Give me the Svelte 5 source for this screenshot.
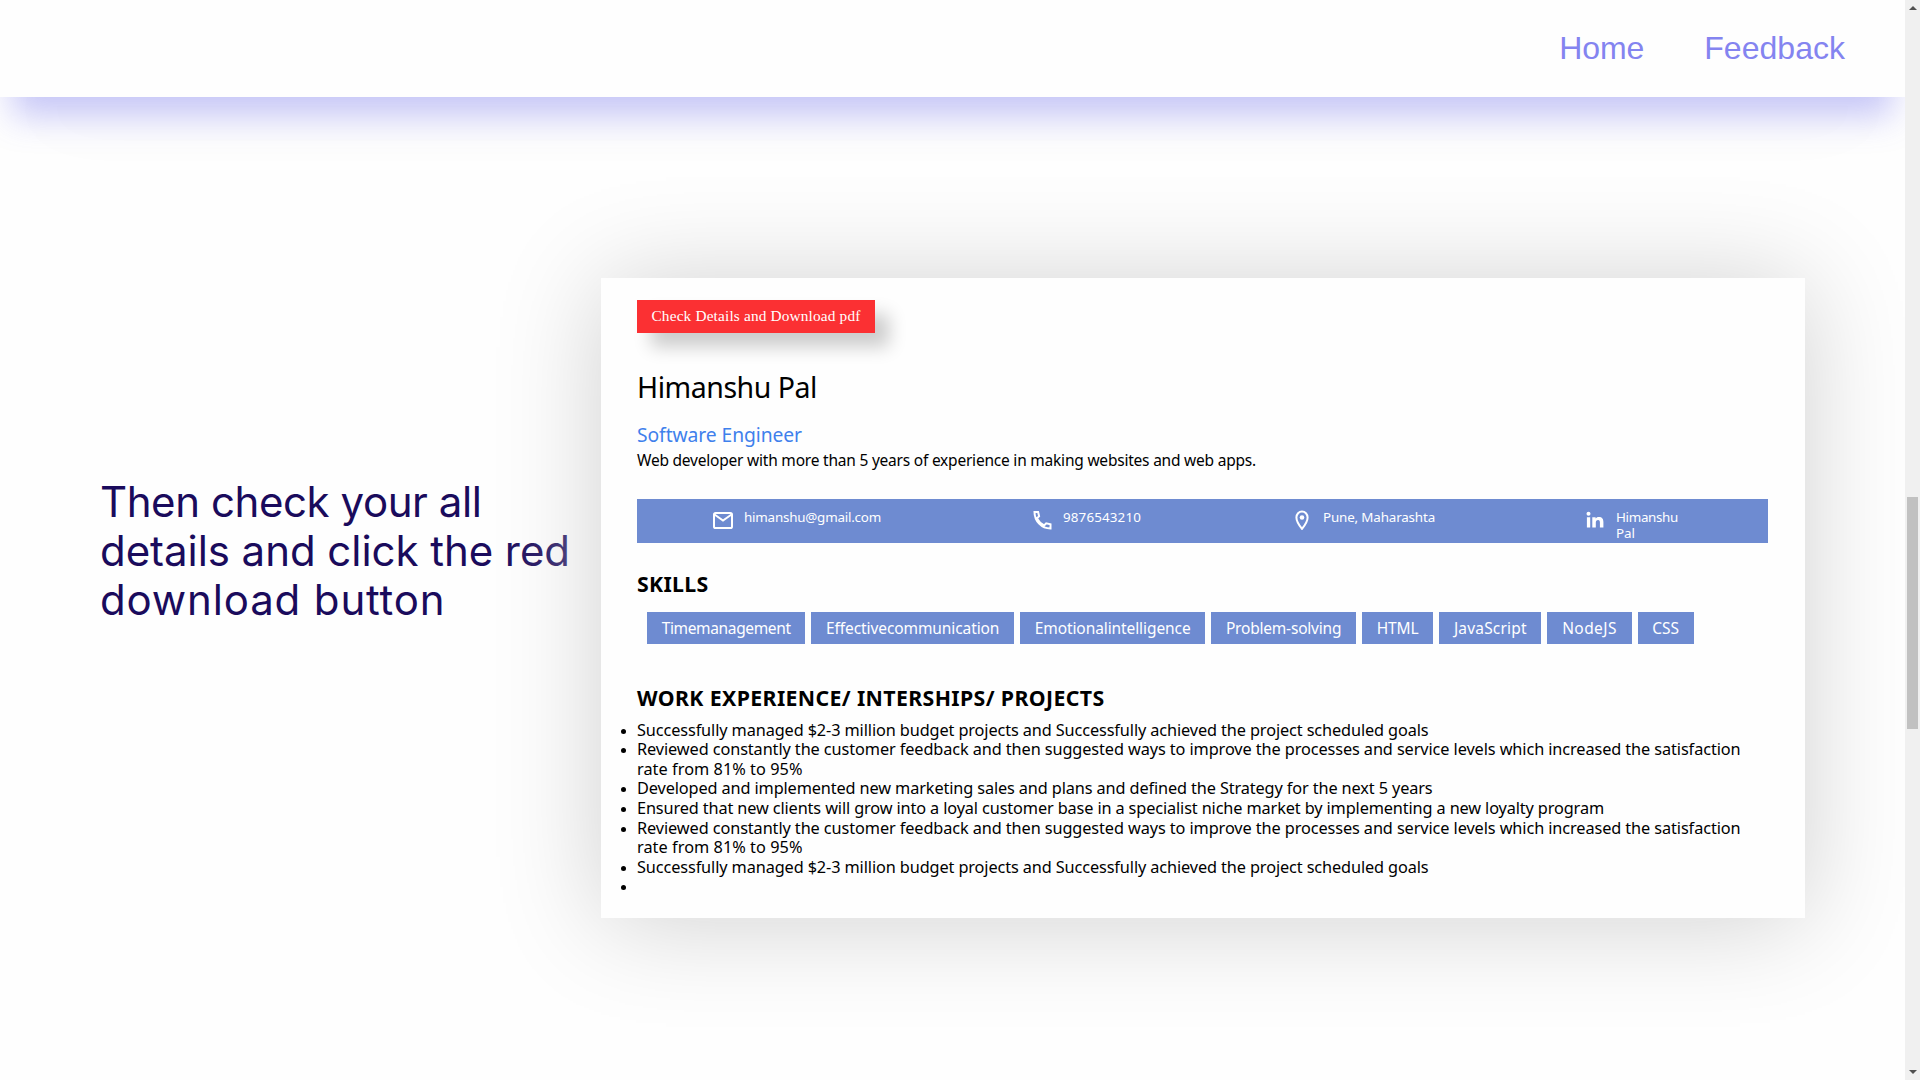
<script>
  const nav = [
    { label: 'Home', width: 85 },
    { label: 'Feedback', width: 140.7 }
  ];

  const headline = [
    { text: 'Then check your all', width: 381.5 },
    { text: 'details and click the red', width: 470 },
    { text: 'download button', width: 345.5 }
  ];

  const skills = [
    { name: 'Timemanagement', width: 129 },
    { name: 'Effectivecommunication', width: 173.3 },
    { name: 'Emotionalintelligence', width: 155.8 },
    { name: 'Problem-solving', width: 115.4 },
    { name: 'HTML', width: 41.9 },
    { name: 'JavaScript', width: 72.8 },
    { name: 'NodeJS', width: 54.8 },
    { name: 'CSS', width: 26.8 }
  ];

  const managed = [
    { text: 'Successfully managed $2-3 million budget projects and Successfully achieved the project scheduled goals', width: 791.5 }
  ];
  const reviewed = [
    { text: 'Reviewed constantly the customer feedback and then suggested ways to improve the processes and service levels which increased the satisfaction', width: 1103.5 },
    { text: 'rate from 81% to 95%', width: 165.5 }
  ];
  const work = [
    managed,
    reviewed,
    [{ text: 'Developed and implemented new marketing sales and plans and defined the Strategy for the next 5 years', width: 795.5 }],
    [{ text: 'Ensured that new clients will grow into a loyal customer base in a specialist niche market by implementing a new loyalty program', width: 967 }],
    reviewed,
    managed,
    []
  ];

  // Tracks a line of text out (or in) until it spans the given width.
  function fit(node, width) {
    const natural = node.getBoundingClientRect().width;
    node.style.letterSpacing = `${(width - natural) / node.textContent.length}px`;
  }
</script>

<div class="page">
  <div class="view">
    <header>
      <nav>
        {#each nav as item}
          <a href="#top"><span use:fit={item.width}>{item.label}</span></a>
        {/each}
      </nav>
    </header>

    <main>
      <h1>
        {#each headline as line}
          <span class="row"><span class="t" use:fit={line.width}>{line.text}</span></span>
        {/each}
      </h1>

      <article class="card">
        <button><span class="t" use:fit={209}>Check Details and Download pdf</span></button>
        <h2><span class="t" use:fit={180}>Himanshu Pal</span></h2>
        <p class="role"><span class="t" use:fit={165}>Software Engineer</span></p>
        <p class="about"><span class="t" use:fit={619}>Web developer with more than 5 years of experience in making websites and web apps.</span></p>

        <div class="contacts">
          <div class="contact mail">
            <svg width="20" height="20" viewBox="0 0 20 20"><rect x="1" y="2.9" width="18" height="15.2" rx="1.6" /><path d="M1.5 4.5 10 10.500l8.500-6" /></svg>
            <div><span class="t" use:fit={137}>himanshu@gmail.com</span></div>
          </div>
          <div class="contact phone">
            <svg width="20" height="20" viewBox="0 0 20 20"><path d="M2.500 2h3.600l1 4.300-2.100 2.100c1.700 3.200 3.900 5.400 7.100 7.100l2.100-2.100 4.300 1V18.500C9.500 18.500 2.500 11 2.500 2z" /></svg>
            <div><span class="t" use:fit={78}>9876543210</span></div>
          </div>
          <div class="contact pin">
            <svg width="20" height="20" viewBox="0 0 20 20"><path d="M10 1.500a5.600 6 0 0 0-5.600 6c0 4.500 5.600 11.400 5.600 11.400S15.600 12 15.600 7.500a5.600 6 0 0 0-5.600-6z" /><circle class="solid" cx="10" cy="7.500" r="2.300" /></svg>
            <div><span class="t" use:fit={112}>Pune, Maharashta</span></div>
          </div>
          <div class="contact linked">
            <svg width="20" height="20" viewBox="0 0 20 20"><circle class="solid" cx="3.500" cy="3.800" r="2" /><path class="solid" d="M1.900 7.200h3.300V17.500H1.900zM7.300 7.200h3.300v1.400c.6-1 1.700-1.700 3.200-1.700 3.400 0 4.600 2 4.600 5v5.600h-3.500v-4.900c0-1.600-.4-2.600-1.800-2.600-1.600 0-2.300 1.100-2.300 2.700v4.800H7.300z" /></svg>
            <div>
              <span class="row"><span class="t" use:fit={62}>Himanshu</span></span>
              <span class="row"><span class="t" use:fit={19}>Pal</span></span>
            </div>
          </div>
        </div>

        <h3><span class="t" use:fit={71.5}>SKILLS</span></h3>
        <div class="skills">
          {#each skills as skill}
            <span class="chip"><span class="t" use:fit={skill.width}>{skill.name}</span></span>
          {/each}
        </div>

        <h3 class="second"><span class="t" use:fit={467.5}>WORK EXPERIENCE/ INTERSHIPS/ PROJECTS</span></h3>
        <ul>
          {#each work as item}
            <li>
              {#each item as line}
                <span class="row"><span class="t" use:fit={line.width}>{line.text}</span></span>
              {/each}
            </li>
          {/each}
        </ul>
      </article>
    </main>
  </div>

  <aside class="scrollbar">
    <i class="arrow up"></i>
    <i class="thumb"></i>
    <i class="arrow down"></i>
  </aside>
</div>

<style>
  :global(body) {
    margin: 0;
    overflow: hidden;
    background: #fff;
  }
  .page {
    display: flex;
    width: 1920px;
    height: 1080px;
    overflow: hidden;
    font-family: 'Noto Sans', sans-serif;
    color: #000;
  }
  .view {
    width: 1905px;
    height: 1080px;
    overflow: hidden;
    background: #fefefe;
  }
  header {
    position: relative;
    z-index: 2;
    box-sizing: border-box;
    height: 97px;
    padding: 30px 60px 0 0;
    background: #fefefe;
    box-shadow: 0 31px 34px -12px rgba(95, 95, 236, 0.34), 0 60px 70px -40px rgba(0, 0, 0, 0.06);
  }
  nav {
    display: flex;
    justify-content: flex-end;
    gap: 60px;
    font: 32px/37px 'Liberation Sans', Arial, sans-serif;
  }
  nav a {
    color: #8484f0;
    text-decoration: none;
  }
  .t {
    display: inline-block;
    white-space: nowrap;
  }
  .row {
    display: block;
    white-space: nowrap;
  }
  main {
    display: flex;
    align-items: flex-start;
    padding-top: 181px;
  }
  h1 {
    width: 501px;
    margin: 199px 0 0;
    padding-left: 100px;
    font: 400 42px/49px Inter, sans-serif;
    color: #1a0b5c;
  }
  .card {
    position: relative;
    box-sizing: border-box;
    flex: none;
    width: 1204px;
    height: 640px;
    padding: 21.500px 36px 0;
    background: #fefefe;
    box-shadow: 0 4px 100px #d1d1d1;
  }
  button {
    display: block;
    width: 238px;
    height: 33.500px;
    padding: 0 0 1px;
    border: 0;
    background: #fb3033;
    box-shadow: 14px 14px 18px rgba(0, 0, 0, 0.2);
    font: 15.300px/18px 'Liberation Serif', serif;
    color: #fff;
  }
  h2 {
    margin: 34px 0 0;
    font-size: 28.500px;
    font-weight: 400;
    line-height: 40px;
  }
  p {
    margin: 0;
  }
  .role {
    margin-top: 15px;
    font-size: 19.300px;
    line-height: 26px;
    color: #3f80ec;
  }
  .about {
    font-size: 15.500px;
    line-height: 24px;
  }
  .contacts {
    display: flex;
    height: 43.500px;
    margin: 27px 1px 0 0;
    background: #6e8bd1;
    font-size: 13.400px;
    line-height: 16.500px;
    color: #fff;
  }
  .contact {
    display: flex;
    align-items: flex-start;
    padding-top: 9.500px;
  }
  .contact svg {
    flex: none;
    margin: 1px 11px 0 0;
    fill: none;
    stroke: #fff;
    stroke-width: 2;
  }
  .contact .solid {
    fill: #fff;
    stroke: none;
  }
  .mail {
    width: 244px;
    padding-left: 76px;
  }
  .phone {
    width: 260px;
    padding-left: 75px;
  }
  .pin {
    width: 293px;
  }
  h3 {
    margin: 27px 0 0;
    font-size: 21.300px;
    font-weight: 700;
    line-height: 28px;
  }
  .skills {
    display: flex;
    gap: 6px;
    margin: 14.500px 0 0 10px;
  }
  .chip {
    height: 31.700px;
    padding: 0 14.700px;
    background: #6e8bd1;
    font-size: 15.500px;
    line-height: 32px;
    color: #fff;
  }
  h3.second {
    margin-top: 40px;
  }
  ul {
    margin: 9px 0 0;
    padding: 0;
    font-size: 16.300px;
    line-height: 19.560px;
  }
  li {
    min-height: 19.560px;
  }
  li::marker {
    font-size: 13.500px;
  }
  .scrollbar {
    display: flex;
    flex-direction: column;
    align-items: center;
    box-sizing: border-box;
    width: 15px;
    height: 1080px;
    padding: 6px 0;
    background: #f0f0f0;
  }
  .arrow {
    width: 0;
    height: 0;
    border: 4px solid transparent;
  }
  .up {
    border-top: 0;
    border-bottom-color: #505050;
  }
  .down {
    margin-top: auto;
    border-bottom: 0;
    border-top-color: #505050;
  }
  .thumb {
    width: 11px;
    height: 232px;
    margin-top: 487px;
    background: #c1c1c1;
  }
</style>
